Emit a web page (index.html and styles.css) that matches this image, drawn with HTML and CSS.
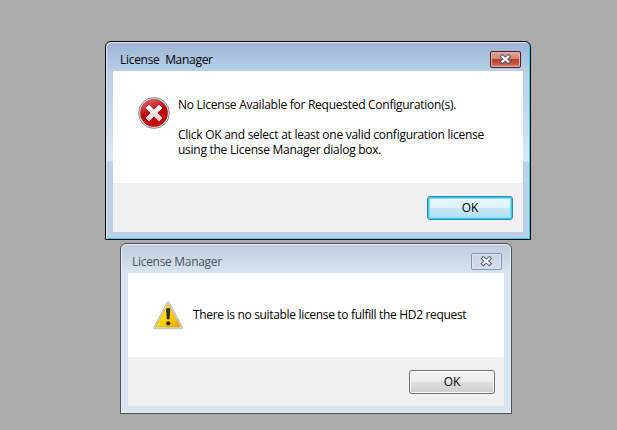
FILE: index.html
```html
<!DOCTYPE html>
<html lang="en">
<head>
<meta charset="utf-8">
<title>License Manager</title>
<link rel="stylesheet" href="styles.css">
</head>
<body>
<main class="desktop">
  <section class="window active">
    <header class="titlebar">
      <h1 class="caption">License  Manager</h1>
      <button class="close" aria-label="Close">
        <svg width="13" height="11" viewBox="0 0 13 11"><path class="x-edge" d="M3.4 2.6 9.2 7.6M9.2 2.6 3.4 7.6"/><path class="x-fill" d="M3.4 2.6 9.2 7.6M9.2 2.6 3.4 7.6"/></svg>
      </button>
    </header>
    <div class="client">
      <div class="message">
        <svg class="icon" width="32" height="32" viewBox="0 0 32 32">
          <defs>
            <linearGradient id="red" x1="0" y1="0" x2="0.4" y2="1"><stop offset="0" stop-color="#e27676"/><stop offset=".45" stop-color="#c91f23"/><stop offset=".55" stop-color="#b80409"/><stop offset="1" stop-color="#c80c10"/></linearGradient>
            <linearGradient id="cross" x1="0" y1="0" x2="0" y2="1"><stop offset="0" stop-color="#fff"/><stop offset="1" stop-color="#d2d2d2"/></linearGradient>
          </defs>
          <circle cx="16" cy="16" r="15.4" fill="#ededed" stroke="#858585"/>
          <circle cx="16" cy="16" r="13.7" fill="url(#red)" stroke="#9c3030" stroke-width=".6"/>
          <path d="M8 11 11 8 16 13 21 8 24 11 19 16 24 21 21 24 16 19 11 24 8 21 13 16Z" fill="url(#cross)" stroke="#e8e0e0" stroke-width=".9" stroke-linejoin="round"/>
        </svg>
        <div class="text">
          <p class="first">No License Available for Requested Configuration(s).</p>
          <p class="second">Click OK and select at least one valid configuration license</p>
          <p class="third">using the License Manager dialog box.</p>
        </div>
      </div>
      <footer class="actions"><button class="ok">OK</button></footer>
    </div>
  </section>
  <section class="window inactive">
    <header class="titlebar">
      <h1 class="caption">License Manager</h1>
      <button class="close" aria-label="Close">
        <svg width="13" height="11" viewBox="0 0 13 11"><path class="x-edge" d="M3.4 2.6 9.2 7.6M9.2 2.6 3.4 7.6"/><path class="x-fill" d="M3.4 2.6 9.2 7.6M9.2 2.6 3.4 7.6"/></svg>
      </button>
    </header>
    <div class="client">
      <div class="message">
        <svg class="icon" width="32" height="32" viewBox="0 0 32 32">
          <defs>
            <linearGradient id="amber" x1="0" y1="0" x2="1" y2="1"><stop offset=".15" stop-color="#ffee32"/><stop offset=".55" stop-color="#fbd312"/><stop offset="1" stop-color="#e69b00"/></linearGradient>
          </defs>
          <g transform="translate(-.8 .3)">
            <path d="M16 3.5 29.3 28.5H2.7Z" fill="#c9c9c9" stroke="#b5b5b5" stroke-width="3" stroke-linejoin="round"/>
            <path d="M16 3.5 29.3 28.5H2.7Z" fill="#ddd" stroke="#dedede" stroke-width="1.4" stroke-linejoin="round"/>
            <path d="M16 4.8 28.5 27.6H3.5Z" fill="url(#amber)" stroke="#d9ad12" stroke-width=".8" stroke-linejoin="round"/>
            <path d="M13.9 10.2Q13.9 8.8 16 8.8T18.1 10.2L17.4 20H14.6Z" fill="#333016"/>
            <circle cx="16" cy="24" r="2.1" fill="#29270f"/>
          </g>
        </svg>
        <div class="text">
          <p class="single">There is no suitable license to fulfill the HD2 request</p>
        </div>
      </div>
      <footer class="actions"><button class="ok">OK</button></footer>
    </div>
  </section>
</main>
</body>
</html>
```
FILE: styles.css
```css
* { box-sizing: border-box; }

body {
  margin: 0;
  background: #ababab;
  color: #000;
  font: 12px/15px "Open Sans", "Noto Sans", sans-serif;
}

h1, p { margin: 0; font: inherit; white-space: pre; }
button { font: inherit; color: inherit; }

.desktop {
  height: 430px;
  overflow: hidden;
  padding: 41px 0 0 105px;
  display: flex;
  flex-direction: column;
  align-items: flex-start;
  gap: 3px;
}

.window { display: flex; flex-direction: column; padding: 0 7px 7px; }

.active {
  width: 426px;
  height: 199px;
  border: 1px solid #000;
  border-radius: 6px 6px 0 0;
  background: linear-gradient(#9bb5d3, #b8d0e9 29px, #c5d9f0 70px, #dce8f6 119px, #b9d1ea 120px);
  box-shadow: inset 1px 1px #e0edf8, inset -1px -1px #32d3ef;
}

.inactive {
  width: 392px;
  height: 171px;
  margin-left: 15px;
  border: 1px solid #4c4e52;
  border-radius: 6px 6px 0 0;
  background: linear-gradient(#bfcddb, #d7e4f2 29px);
  box-shadow: inset 0 0 0 1px #e9f1f8;
}

.titlebar {
  height: 29px;
  flex: none;
  display: flex;
  justify-content: space-between;
  padding: 9px 2px 0 7px;
}

.caption { padding-top: 1px; letter-spacing: -.3px; }
.inactive .titlebar { padding-left: 4px; color: #4b535d; }

.close {
  width: 31px;
  height: 17px;
  padding: 0;
  display: flex;
  align-items: center;
  justify-content: center;
  border: 1px solid #481c27;
  border-radius: 2px;
  background: linear-gradient(#e3a496, #d18677 48%, #b94025 50%, #c2533b 75%, #d68b77);
  box-shadow: inset 0 0 0 1px #eab2a6;
}

.inactive .close {
  border-color: #8794a7;
  background: linear-gradient(#c8d4e1, #d2deeb);
  box-shadow: inset 0 0 0 1px #dce6f0;
}

.x-edge { fill: none; stroke: #505368; stroke-width: 4; stroke-linecap: square; }
.x-fill { fill: none; stroke: #fff; stroke-width: 2.1; stroke-linecap: square; }

.client { flex: 1; display: flex; flex-direction: column; background: #fff; }
.message { flex: 1; display: flex; padding: 26px 0 0 25px; }
.icon { flex: none; }
.text { padding: 0 0 0 8px; letter-spacing: -.265px; }
.second { margin-top: 15px; }
.single { letter-spacing: -.325px; }

.actions {
  height: 49px;
  flex: none;
  display: flex;
  justify-content: flex-end;
  padding: 13px 10px 0 0;
  background: #f0f0f0;
}
.inactive .actions { padding-right: 9px; }
.inactive .text { padding-top: 8px; }

.ok {
  width: 86px;
  height: 24px;
  padding: 0 0 1px;
  border: 1px solid #707070;
  border-radius: 3px;
  background: linear-gradient(#f2f2f2, #ebebeb 49%, #dddddd 50%, #cfcfcf);
  box-shadow: inset 0 0 0 1px #fafafa;
  letter-spacing: -.2px;
}

.active .ok {
  border-color: #3c7fb1;
  background: linear-gradient(#eaf6fd, #dcf2fc 49%, #c6e8f9 50%, #b4dff5);
  box-shadow: inset 0 0 0 1px #28cff5, inset 0 0 0 2px #85ddf5;
}
```
